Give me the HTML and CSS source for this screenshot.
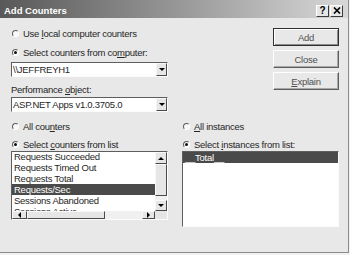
FILE: index.html
```html
<!DOCTYPE html>
<html>
<head>
<meta charset="utf-8">
<title>Add Counters</title>
<link rel="stylesheet" href="styles.css">
</head>
<body>
<div class="window">
  <div class="titlebar">
    <span class="title">Add Counters</span>
    <div class="tbtns">
      <span class="tbtn">?</span>
      <span class="tbtn"><svg width="8" height="7" viewBox="0 0 8 7"><path d="M1 0.5 L7 6.5 M7 0.5 L1 6.5" stroke="#000" stroke-width="1.6" fill="none"/></svg></span>
    </div>
  </div>
  <div class="top">
    <div class="col-top">
      <label class="radio"><span class="rb"></span><span>Use <u>l</u>ocal computer counters</span></label>
      <label class="radio on gap7"><span class="rb"></span><span>Select counters from co<u>m</u>puter:</span></label>
      <div class="combo gap4"><span class="ctext">\\JEFFREYH1</span><span class="drop"></span></div>
      <div class="label gap7">Performance <u>o</u>bject:</div>
      <div class="combo gap1"><span class="ctext">ASP.NET Apps v1.0.3705.0</span><span class="drop"></span></div>
    </div>
    <div class="buttons">
      <div class="btn default"><span>Add</span></div>
      <div class="btn"><span>Close</span></div>
      <div class="btn"><span><u>E</u>xplain</span></div>
    </div>
  </div>
  <div class="bottom">
    <div class="col">
      <label class="radio"><span class="rb"></span><span>All cou<u>n</u>ters</span></label>
      <label class="radio on gap6"><span class="rb"></span><span>Select <u>c</u>ounters from list</span></label>
      <div class="listbox">
        <div class="items">
          <div class="item first">Requests Succeeded</div>
          <div class="item">Requests Timed Out</div>
          <div class="item">Requests Total</div>
          <div class="item sel">Requests/Sec</div>
          <div class="item">Sessions Abandoned</div>
          <div class="item">Sessions Active</div>
        </div>
        <div class="vscroll">
          <span class="sbtn up"><i class="tri-up"></i></span>
          <span class="sbtn vthumb"></span>
          <span class="track"></span>
          <span class="sbtn down"><i class="tri-down"></i></span>
        </div>
        <div class="hscroll">
          <span class="sbtn left"><i class="tri-left"></i></span>
          <span class="sbtn hthumb"></span>
          <span class="track"></span>
          <span class="sbtn right"><i class="tri-right"></i></span>
        </div>
        <div class="corner"></div>
      </div>
    </div>
    <div class="col">
      <label class="radio"><span class="rb"></span><span><u>A</u>ll instances</span></label>
      <label class="radio on gap6"><span class="rb"></span><span>Select <u>i</u>nstances from list:</span></label>
      <div class="ilist">
        <div class="item sel">__Total__</div>
      </div>
    </div>
  </div>
</div>
</body>
</html>
```

FILE: styles.css
```css
html, body {
  margin: 0;
  padding: 0;
}
body {
  background: #f2f2f2;
  font-family: "Liberation Sans", Arial, sans-serif;
  font-size: 9.5px;
  letter-spacing: -0.25px;
  color: #262626;
}
u {
  text-decoration: underline;
  text-underline-offset: 1px;
}
.window {
  width: 348px;
  height: 252px;
  background: #e8e8e8;
  border-right: 1px solid #8a8a8a;
  border-bottom: 1px solid #8a8a8a;
  display: flex;
  flex-direction: column;
}
.titlebar {
  height: 18px;
  box-sizing: border-box;
  padding: 3px 5px 0 4px;
  background: linear-gradient(to right, #585858, #9c9c9c 55%, #d8d8d8);
  display: flex;
  align-items: center;
  justify-content: space-between;
}
.title {
  color: #fff;
  font-weight: bold;
  font-size: 9.5px;
  letter-spacing: 0;
}
.tbtns {
  display: flex;
  gap: 1px;
}
.tbtn {
  width: 13px;
  height: 12px;
  box-sizing: border-box;
  background: #e6e6e6;
  border: 1px solid;
  border-color: #fff #3a3a3a #3a3a3a #fff;
  display: flex;
  align-items: center;
  justify-content: center;
  font-weight: bold;
  font-size: 10px;
  letter-spacing: 0;
  color: #000;
  line-height: 1;
}
.top {
  display: flex;
  justify-content: space-between;
  padding: 0 9px 0 11px;
}
.col-top {
  width: 157px;
  display: flex;
  flex-direction: column;
  padding-top: 9px;
}
.radio {
  display: flex;
  align-items: center;
  gap: 4px;
  height: 12px;
  white-space: nowrap;
}
.rb {
  position: relative;
  width: 7px;
  height: 7px;
  margin-left: 1px;
  box-sizing: border-box;
  border-radius: 50%;
  border: 1px solid;
  border-color: #5e5e5e #fff #fff #5e5e5e;
  background: #f8f8f8;
  flex: none;
}
.on .rb::after {
  content: "";
  position: absolute;
  left: 1px;
  top: 1px;
  width: 3px;
  height: 3px;
  border-radius: 50%;
  background: #111;
}
.label {
  height: 12px;
  line-height: 12px;
  white-space: nowrap;
}
.gap1 { margin-top: 1px; }
.gap4 { margin-top: 4px; }
.gap6 { margin-top: 6px; }
.gap7 { margin-top: 7px; }
.combo {
  height: 15px;
  box-sizing: border-box;
  border: 1px solid;
  border-color: #5e5e5e #fcfcfc #fcfcfc #5e5e5e;
  background: #fff;
  display: flex;
  align-items: center;
}
.ctext {
  flex: 1;
  padding-left: 1px;
  white-space: nowrap;
  overflow: hidden;
}
.drop {
  width: 11px;
  height: 13px;
  box-sizing: border-box;
  background: #e6e6e6;
  border: 1px solid;
  border-color: #f6f6f6 #4a4a4a #4a4a4a #f6f6f6;
  display: flex;
  align-items: center;
  justify-content: center;
}
.drop::before {
  content: "";
  border-left: 3px solid transparent;
  border-right: 3px solid transparent;
  border-top: 3px solid #000;
}
.buttons {
  width: 66px;
  padding-top: 10px;
  display: flex;
  flex-direction: column;
  gap: 4px;
}
.btn {
  height: 18px;
  box-sizing: border-box;
  background: #e8e8e8;
  border: 1px solid;
  border-color: #fff #5e5e5e #5e5e5e #fff;
  box-shadow: inset -1px -1px 0 #a8a8a8;
  display: flex;
  align-items: center;
  justify-content: center;
  color: #505050;
}
.btn.default {
  border-color: #2e2e2e;
  box-shadow: inset 1px 1px 0 #fff, inset -1px -1px 0 #8a8a8a;
}
.bottom {
  display: flex;
  gap: 14px;
  padding-left: 11px;
  margin-top: 8px;
}
.col {
  width: 157px;
  display: flex;
  flex-direction: column;
}
.listbox {
  margin-top: 1px;
  height: 69px;
  box-sizing: border-box;
  border: 1px solid;
  border-color: #5e5e5e #fcfcfc #fcfcfc #5e5e5e;
  background: #fff;
  display: grid;
  grid-template-columns: 1fr 12px;
  grid-template-rows: 1fr 8px;
}
.items {
  overflow: hidden;
}
.item {
  height: 11px;
  line-height: 11px;
  padding-left: 2px;
  white-space: nowrap;
}
.item.first {
  margin-top: -1px;
}
.item.sel {
  background: #4a4a4a;
  color: #fff;
}
.vscroll {
  display: flex;
  flex-direction: column;
  background: #f0f0f0;
}
.hscroll {
  display: flex;
  background: #f0f0f0;
}
.sbtn {
  box-sizing: border-box;
  background: #e6e6e6;
  border: 1px solid;
  border-color: #f8f8f8 #4a4a4a #4a4a4a #f8f8f8;
  display: flex;
  align-items: center;
  justify-content: center;
  flex: none;
}
.track {
  flex: 1;
}
.up { height: 12px; }
.vthumb { height: 32px; }
.down { height: 11px; }
.left { width: 15px; }
.hthumb { width: 78px; }
.right { width: 13px; }
.corner {
  background: #e6e6e6;
}
.tri-up {
  border-left: 3px solid transparent;
  border-right: 3px solid transparent;
  border-bottom: 3px solid #000;
}
.tri-down {
  border-left: 3px solid transparent;
  border-right: 3px solid transparent;
  border-top: 3px solid #000;
}
.tri-left {
  border-top: 3px solid transparent;
  border-bottom: 3px solid transparent;
  border-right: 3px solid #000;
}
.tri-right {
  border-top: 3px solid transparent;
  border-bottom: 3px solid transparent;
  border-left: 3px solid #000;
}
.ilist {
  margin-top: 1px;
  height: 76px;
  box-sizing: border-box;
  border: 1px solid;
  border-color: #5e5e5e #fcfcfc #fcfcfc #5e5e5e;
  background: #fff;
}
```
